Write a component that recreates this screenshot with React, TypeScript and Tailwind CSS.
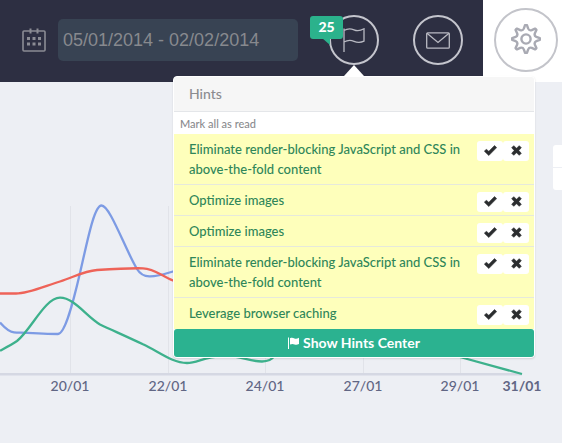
import React from "react";

const hints = [
  "Eliminate render-blocking JavaScript and CSS in above-the-fold content",
  "Optimize images",
  "Optimize images",
  "Eliminate render-blocking JavaScript and CSS in above-the-fold content",
  "Leverage browser caching",
];

const ticks = [
  { x: 70, label: "20/01" },
  { x: 168, label: "22/01" },
  { x: 265, label: "24/01" },
  { x: 363, label: "27/01" },
  { x: 460, label: "29/01" },
];

function CalendarIcon() {
  return (
    <svg className="size-6 shrink-0" viewBox="0 0 24 24" fill="none" stroke="#8b8c94" aria-hidden="true">
      <rect x="1" y="3" width="22" height="20" rx="1" strokeWidth="1.600" />
      <path d="M8.500 0.500v5M15.500 0.500v5" strokeWidth="2" />
      <path d="M5 10.500h14M5 16h14" strokeWidth="3" strokeDasharray="3 2.500" />
    </svg>
  );
}

function FlagOutline() {
  return (
    <svg className="h-6 w-[22px]" viewBox="0 0 22 24" fill="none" stroke="#b9bac3" strokeWidth="1.300" aria-hidden="true">
      <path d="M1 0.500V24M1 2.500C4.500 0.300 8 0.500 11 1.800S17 3 21 0.800V13.200C17 15 14 14.600 11 13.300S4.500 12 1 14" />
    </svg>
  );
}

function MailIcon() {
  return (
    <svg className="h-[17px] w-6" viewBox="0 0 24 17" fill="none" stroke="#b9bac3" strokeWidth="1.300" aria-hidden="true">
      <rect x="0.700" y="0.800" width="22.600" height="15.400" rx="1" />
      <path d="M1 1.200L12 10.500L23 1.200" />
    </svg>
  );
}

function gearPath() {
  const parts: string[] = [];
  for (let i = 0; i < 8; i++) {
    const pt = (deg: number, r: number) => {
      const a = ((i * 45 + deg - 90) * Math.PI) / 180;
      return `${(15 + r * Math.cos(a)).toFixed(2)} ${(15 + r * Math.sin(a)).toFixed(2)}`;
    };
    parts.push(`${i ? "L" : "M"}${pt(-4, 13.8)}Q${pt(0, 14)} ${pt(4, 13.8)}L${pt(12, 10.6)}Q${pt(22.5, 8.6)} ${pt(33, 10.6)}`);
  }
  return parts.join("") + "Z";
}

function GearIcon() {
  return (
    <svg className="size-[30px]" viewBox="0 0 30 30" fill="none" stroke="#a9aab3" strokeWidth="2.400" strokeLinejoin="round" aria-hidden="true">
      <path d={gearPath()} />
      <circle cx="15" cy="15" r="4.600" />
    </svg>
  );
}

function CheckIcon() {
  return (
    <svg className="h-[11px] w-[13px]" viewBox="0 0 13 11" aria-hidden="true">
      <path d="M0.300 6.200L2.300 4.200L4.800 6.300L10.500 0.500L12.700 2.600L4.800 10.600Z" fill="#2b2d2f" stroke="#2b2d2f" strokeWidth="0.500" strokeLinejoin="round" />
    </svg>
  );
}

function CrossIcon() {
  return (
    <svg className="size-[11px]" viewBox="0 0 11 11" aria-hidden="true">
      <path d="M2.700 0.700L5.500 3.200L8.300 0.700L10.300 2.700L7.800 5.500L10.300 8.300L8.300 10.300L5.500 7.800L2.700 10.300L0.700 8.300L3.200 5.500L0.700 2.700Z" fill="#2b2d2f" stroke="#2b2d2f" strokeWidth="0.600" strokeLinejoin="round" />
    </svg>
  );
}

function HintsMenu() {
  return (
    <section
      aria-label="Hints"
      className="absolute top-[61px] left-1/2 z-10 w-[362px] -translate-x-1/2 rounded-[4px] border border-white bg-white text-[14px] leading-5 shadow-[0_1px_2px_rgba(0,0,0,0.12)]"
    >
      <svg className="absolute -top-3 left-1/2 h-[11px] w-5 -translate-x-1/2" viewBox="0 0 20 11" aria-hidden="true">
        <path d="M10 0L20 11H0Z" fill="#fff" />
      </svg>
      <h2 className="h-[35px] rounded-t-[3px] border-b border-[#e4e6e9] bg-[#f6f6f6] px-[15px] py-[7px] font-medium text-[#8b8c90]">Hints</h2>
      <button type="button" className="block h-[22px] px-1.5 pt-0.5 text-[11px] font-medium text-[#8a8b8e]">
        Mark all as read
      </button>
      <ul className="text-[13px] font-medium">
        {hints.map((hint, i) => (
          <li key={i} className="flex items-start border-b border-[#e6e9dc] bg-[#feffbb] pr-[5px] pl-[15px] leading-5 last:border-[#feffbb]">
            <a href="#hint" className="flex-1 py-[5px] text-[#2f8659]">
              {hint}
            </a>
            <div className="mt-[7px] ml-2 flex">
              <button type="button" aria-label="Mark as read" className="flex h-5 w-[26px] items-center justify-center rounded-[3px] bg-white pb-px">
                <CheckIcon />
              </button>
              <button type="button" aria-label="Dismiss" className="flex h-5 w-[26px] items-center justify-center rounded-[3px] bg-white pb-px">
                <CrossIcon />
              </button>
            </div>
          </li>
        ))}
      </ul>
      <button type="button" className="flex h-7 w-full items-center justify-center gap-1 rounded-[3px] bg-[#2bb290] font-bold text-white">
        <svg className="h-3 w-[11px]" viewBox="0 0 11 12" fill="#fff" aria-hidden="true">
          <path d="M0 0.500H1V12H0ZM2 1.200C4 0.200 5 0.800 6.500 1.400S9 1.800 11 0.800V7C9 8 8 8 6.500 7.400S4 6.600 2 7.600Z" />
        </svg>
        Show Hints Center
      </button>
    </section>
  );
}

function TopBar() {
  return (
    <header className="flex h-[82px] bg-[#2d2f42]">
      <div className="flex flex-1 items-center pr-5 pb-0.5 pl-[22px]">
        <label htmlFor="range" aria-label="Date range">
          <CalendarIcon />
        </label>
        <input
          id="range"
          type="text"
          defaultValue="05/01/2014 - 02/02/2014"
          className="ml-3 h-[42px] w-60 rounded-[5px] bg-[#384353] px-[5px] font-['Liberation_Sans',Arial,sans-serif] text-[18px] text-[#87898e] outline-none"
        />
        <div className="ml-auto flex gap-[34px]">
          <div className="relative">
            <button type="button" aria-label="Hints" className="flex size-[50px] items-center justify-center rounded-full border-2 border-[#c4c5cd]">
              <FlagOutline />
            </button>
            <span className="absolute top-px -left-[19px] h-[23px] w-[33px] rounded-[3px] bg-[#2bb28c] text-center text-[14px] leading-[22px] font-black text-white">
              25
              <svg className="absolute top-[22px] left-3 h-[7px] w-2" viewBox="0 0 8 7" aria-hidden="true">
                <path d="M0 0H8V7Z" fill="#2bb28c" />
              </svg>
            </span>
            <HintsMenu />
          </div>
          <button type="button" aria-label="Messages" className="flex size-[50px] items-center justify-center rounded-full border-2 border-[#c4c5cd]">
            <MailIcon />
          </button>
        </div>
      </div>
      <div className="bg-white pt-2 pr-1 pl-[11px]">
        <button type="button" aria-label="Settings" className="flex size-16 items-center justify-center rounded-full border-2 border-[#c3c4ca] pb-0.5">
          <GearIcon />
        </button>
      </div>
    </header>
  );
}

function Chart() {
  return (
    <svg className="block h-auto w-full" viewBox="0 190 562 230" fill="none" role="img" aria-label="Daily trend">
      {ticks.map((t) => (
        <line key={t.x} x1={t.x + 0.5} x2={t.x + 0.5} y1="206" y2="373" stroke="#e1e3e9" />
      ))}
      <rect x="0" y="373" width="522" height="2.500" fill="#d5d8e3" />
      <g strokeWidth="2.300">
        <path stroke="#7d9be4" d="M0 322.500C4 327 9 332 14 332.300C28 333 45 334 58 334C65 334 73 303 80 273C87 243 94 205.500 101.500 205.500C110 205.500 125 249 137 269C143 279 152 278 173 271.500S220 262 240 270" />
        <path stroke="#ee6358" d="M0 293.500H16C28 293.500 45 286 60 281.500C74 277 84 271 97 270C112 269 130 268 143 268.300C154 268.500 162 276 173 280.500L230 300" />
        <path stroke="#3db18c" d="M0 350.700C5 348 11 345 17 341C31 330 45 297.700 60 297.700C74 297.700 86 316 100 324.500C114 331 130 338 143 344.300C158 351 172 363 187 363C197 363 204 357 222 356C240 355 248 361.500 262 361.500C268 361.500 272 360 275 355L300 335L400 340L460 357L522 374" />
      </g>
      <g fill="#616684" fontSize="14" fontWeight="500" textAnchor="middle">
        {ticks.map((t) => (
          <text key={t.x} x={t.x} y="391">
            {t.label}
          </text>
        ))}
        <text x="522" y="391" fontWeight="700">
          31/01
        </text>
      </g>
    </svg>
  );
}

export default function App() {
  return (
    <div className="min-h-screen bg-[#edeff4] font-[Lato,sans-serif]">
      <TopBar />
      <main className="pt-[63px]">
        <div className="flex flex-col items-end gap-px">
          <button type="button" aria-label="Zoom in" className="h-[22px] w-[9px] rounded-tl-[3px] bg-white" />
          <button type="button" aria-label="Zoom out" className="h-[22px] w-[9px] rounded-bl-[3px] bg-white" />
        </div>
        <Chart />
      </main>
    </div>
  );
}
